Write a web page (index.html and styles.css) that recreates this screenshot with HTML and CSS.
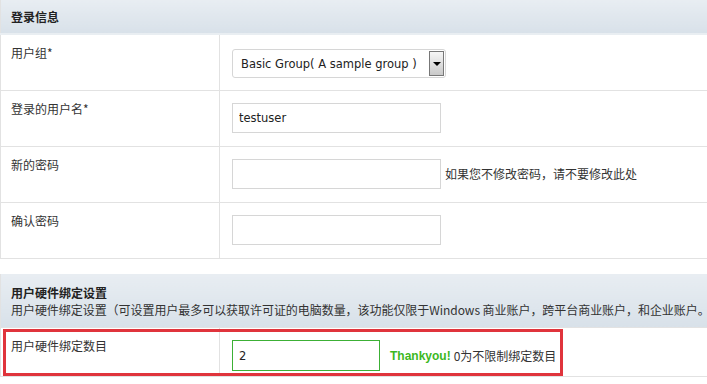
FILE: index.html
```html
<!DOCTYPE html>
<html lang="zh">
<head>
    <meta charset="UTF-8">
    <title>用户设置</title>
    <link rel="stylesheet" href="styles.css">
</head>
<body>
    <table class="form-table">
        <colgroup><col class="col-label"><col></colgroup>
        <tr class="head-row">
            <th colspan="2">登录信息</th>
        </tr>
        <tr class="field-row">
            <td class="label">用户组*</td>
            <td class="value">
                <div class="select-box">
                    <span class="select-text">Basic Group( A sample group )</span>
                    <span class="select-btn"><span class="arrow"></span></span>
                </div>
            </td>
        </tr>
        <tr class="field-row">
            <td class="label">登录的用户名*</td>
            <td class="value"><input type="text" class="text-box" value="testuser"></td>
        </tr>
        <tr class="field-row">
            <td class="label">新的密码</td>
            <td class="value"><input type="password" class="text-box"><span class="hint">如果您不修改密码，请不要修改此处</span></td>
        </tr>
        <tr class="field-row">
            <td class="label">确认密码</td>
            <td class="value"><input type="password" class="text-box"></td>
        </tr>
    </table>

    <div class="bind-wrap">
        <table class="form-table">
            <colgroup><col class="col-label"><col></colgroup>
            <tr class="head-row tall">
                <th colspan="2">
                    <div class="head-title">用户硬件绑定设置</div>
                    <div class="head-desc">用户硬件绑定设置（可设置用户最多可以获取许可证的电脑数量，该功能仅限于Windows 商业账户，跨平台商业账户，和企业账户。</div>
                </th>
            </tr>
            <tr class="bind-row">
                <td class="label">用户硬件绑定数目</td>
                <td class="value"><input type="text" class="text-box small ok" value="2"><span class="thanks">Thankyou!</span><span class="hint">0为不限制绑定数目</span></td>
            </tr>
        </table>
        <!-- 标注框 -->
        <div class="mark-box"></div>
    </div>
</body>
</html>
```

FILE: styles.css
```css
body {
    margin: 0;
    padding: 0;
    background: #fff;
    font-family: 'Noto Sans CJK SC', 'DejaVu Sans', sans-serif;
    font-size: 12px;
    line-height: 16px;
    color: #333;
    overflow: hidden;
}

.form-table {
    width: 720px;
    border-collapse: collapse;
    table-layout: fixed;
}

.col-label {
    width: 219px;
}

.form-table td {
    border: 1px solid #e2e2e2;
    vertical-align: top;
    box-sizing: border-box;
}

.head-row th {
    height: 34px;
    padding: 0 10px;
    text-align: left;
    font-weight: bold;
    color: #222;
    background: linear-gradient(#e8edf2, #d8e1e9);
    border-left: 1px solid #e2e2e2;
    border-bottom: 2px solid #e9eef2;
    box-sizing: border-box;
}

.head-row.tall th {
    height: 54px;
    padding-top: 10px;
    vertical-align: top;
    border-bottom: none;
}

.head-title {
    line-height: 17px;
}

.head-desc {
    font-weight: normal;
    line-height: 17px;
    white-space: nowrap;
    letter-spacing: -0.05px;
    color: #333;
}

.label {
    padding: 10px 10px 0;
}

.value {
    padding: 0 12px;
    white-space: nowrap;
}

.field-row td {
    height: 56px;
}

.field-row .value {
    padding-top: 12px;
}

.select-box {
    display: flex;
    align-items: center;
    width: 214px;
    height: 29px;
    margin-top: 2px;
    border: 1px solid #d6d6d6;
    border-radius: 3px;
    box-sizing: border-box;
    font-family: 'DejaVu Sans', sans-serif;
    font-size: 11.5px;
    color: #222;
}

.select-text {
    flex: 1;
    padding-left: 8px;
    white-space: nowrap;
}

.select-btn {
    width: 15px;
    height: 25px;
    margin-right: 1px;
    border: 1px solid #777;
    background: linear-gradient(#f6f6f6, #c9c9c9);
    box-sizing: border-box;
    display: flex;
    align-items: center;
    justify-content: center;
}

.arrow {
    width: 0;
    height: 0;
    border-left: 4px solid transparent;
    border-right: 4px solid transparent;
    border-top: 4px solid #000;
}

.text-box {
    width: 209px;
    height: 30px;
    padding: 0 6px;
    border: 1px solid #d6d6d6;
    box-sizing: border-box;
    font-family: 'DejaVu Sans', sans-serif;
    font-size: 11.5px;
    color: #222;
    vertical-align: middle;
    outline: none;
}

.hint {
    margin-left: 4px;
    vertical-align: middle;
    color: #333;
}

.bind-wrap {
    position: relative;
    margin-top: 15px;
}

.bind-row td {
    height: 49px;
}

.bind-row .label {
    padding-top: 10px;
}

.bind-row .value {
    padding-top: 12px;
}

.text-box.small {
    width: 148px;
    height: 31px;
}

.text-box.ok {
    border-color: #3cb035;
}

.thanks {
    margin-left: 10px;
    font-family: 'Liberation Sans', Arial, sans-serif;
    font-weight: bold;
    font-size: 12px;
    color: #3cb81e;
    vertical-align: middle;
}

.bind-row .hint {
    margin-left: 3px;
}

.mark-box {
    position: absolute;
    left: 3px;
    top: 55px;
    width: 560px;
    height: 47px;
    border: 3px solid #e0343c;
    box-sizing: border-box;
}
```
